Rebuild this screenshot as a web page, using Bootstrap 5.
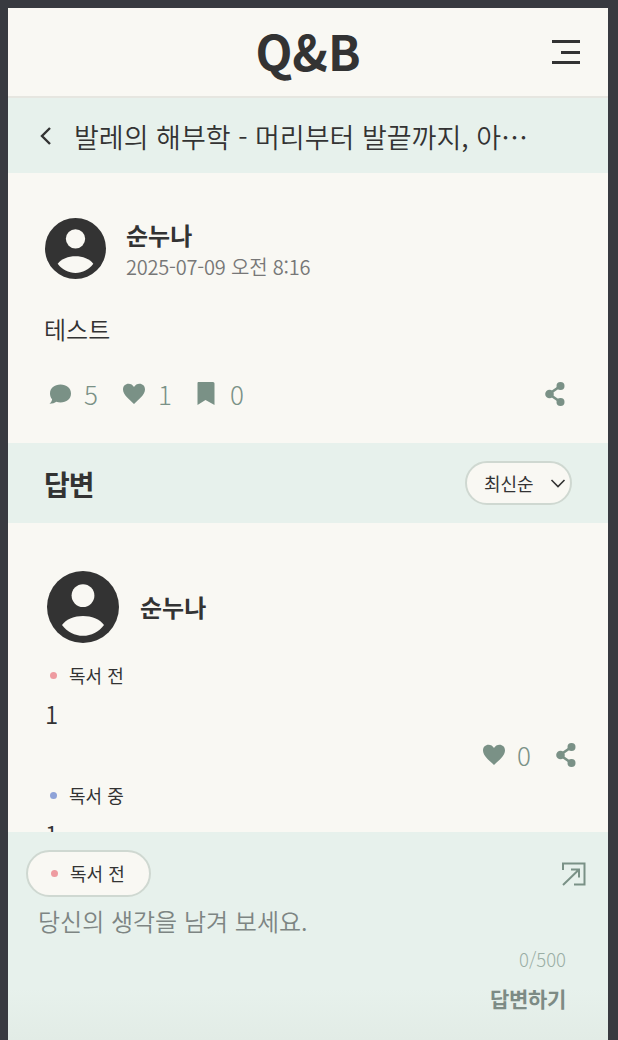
<!DOCTYPE html>
<html lang="ko">
<head>
  <meta charset="UTF-8">
  <meta name="viewport" content="width=device-width, initial-scale=1.0">
  <title>Q&amp;B</title>
  <link href="https://cdn.jsdelivr.net/npm/bootstrap@5.3.3/dist/css/bootstrap.min.css" rel="stylesheet" />
  <style>
    html, body { height: 100%; }
    body { background-color: #383a40; font-family: "Noto Sans CJK KR", "Noto Sans", sans-serif; color: #333; overflow: hidden; }
    .app-frame { margin: 8px 10px 0 8px; height: 1032px; background-color: #f9f8f3; }
    .app-header { height: 90px; border-bottom: 2px solid #e6e6e0; }
    .app-title { font-size: 48px; font-weight: 700; line-height: 1; color: #333; margin-top: -4px; }
    .menu-btn { right: 28px; top: 32px; width: 28px; height: 24px; }
    .book-bar { height: 75px; background-color: #e7f1ec; padding: 0 80px 0 32px; }
    .book-back { margin-right: 22px; }
    .book-title { font-size: 27px; font-weight: 350; color: #333; margin-top: 4px; }
    .post-box { padding: 45px 37px 0; height: 270px; }
    .post-meta { padding-top: 3px; margin-left: 20px; }
    .post-name { font-size: 24px; font-weight: 700; line-height: 28px; }
    .post-date { font-size: 20px; line-height: 24px; margin-top: 6px; color: #777; font-weight: 350; letter-spacing: -0.2px; }
    .post-text { font-size: 24px; line-height: 34px; margin: 33px 0 0 -1px; font-weight: 350; }
    .stat-row { margin-top: 31px; padding-left: 3px; padding-right: 6px; height: 34px; }
    .stat-item { font-size: 26px; font-weight: 300; color: #7a9186; line-height: 34px; width: 74px; gap: 12px; }
    .stat-item-last { width: auto; gap: 14px; }
    .stat-icon { fill: #7a9186; }
    .answers-bar { height: 80px; background-color: #e7f1ec; padding: 0 36px; }
    .answers-title { font-size: 28px; font-weight: 700; letter-spacing: -1px; margin-top: 4px; }
    .sort-pill { width: 107px; height: 44px; border: 2px solid #cfd8d1; border-radius: 22px; background-color: #f9f8f3; font-size: 18px; padding: 0 4px 0 17px; }
    .answer-box { padding: 48px 31px 0 39px; }
    .answer-name { font-size: 24px; font-weight: 700; margin-left: 21px; }
    .stage-label { font-size: 18px; line-height: 24px; font-weight: 400; margin-top: 20px; }
    .stage-label-next { margin-top: 11px; }
    .stage-dot { width: 7px; height: 7px; border-radius: 50%; margin: 0 12px 0 3px; flex: none; }
    .dot-before { background-color: #ee9ba0; }
    .dot-during { background-color: #8fa3d8; }
    .answer-text { font-size: 24px; line-height: 34px; font-weight: 350; margin: 10px 0 0 -2px; }
    .answer-actions { margin-top: 7px; justify-content: flex-end; width: auto; gap: 0; }
    .answer-count { margin-left: 11px; }
    .composer { height: 208px; background: linear-gradient(#e7f1ec 75%, #e2ece6); padding: 18px 22px 0 18px; }
    .stage-pill { width: 125px; height: 47px; border: 2px solid #cfd8d1; border-radius: 24px; background-color: #f9f8f3; font-size: 18px; padding-left: 20px; }
    .composer-hint { font-size: 24px; font-weight: 350; color: #7d8583; line-height: 34px; margin: 7px 0 0 12px; }
    .composer-count { font-size: 18.500px; font-weight: 300; color: #9aaea5; line-height: 24px; margin: 9px 20px 0 0; }
    .composer-submit { font-size: 21px; font-weight: 700; color: #7d8b85; line-height: 30px; margin: 12px 20px 0 0; letter-spacing: -0.3px; }
  </style>
</head>
<body>

<div class="app-frame d-flex flex-column">
  <!-- Header -->
  <header class="app-header position-relative d-flex align-items-center justify-content-center flex-shrink-0">
    <h1 class="app-title mb-0">Q&amp;B</h1>
    <svg class="menu-btn position-absolute" viewBox="0 0 28 24" aria-label="메뉴">
      <path d="M0 1.500h28M9 12.500h19M0 22.500h28" stroke="#333" stroke-width="3" fill="none"/>
    </svg>
  </header>

  <!-- Book title -->
  <div class="book-bar d-flex align-items-center flex-shrink-0">
    <svg width="12" height="20" viewBox="0 0 12 20" class="book-back flex-shrink-0">
      <path d="M10 2 2 10l8 8" stroke="#333" stroke-width="2.400" fill="none"/>
    </svg>
    <span class="book-title text-truncate">발레의 해부학 - 머리부터 발끝까지, 아름다운 움직임</span>
  </div>

  <div class="flex-grow-1 overflow-hidden">
    <!-- Question -->
    <section class="post-box">
      <div class="d-flex align-items-start">
        <svg width="61" height="61" viewBox="0 0 60 60" class="flex-shrink-0">
          <circle cx="30" cy="30" r="30" fill="#333"/>
          <circle cx="30" cy="20.500" r="9.500" fill="#f9f8f3"/>
          <path d="M12.500 45C16 40 23 37.500 30 37.500S44 40 47.500 45C43 51 37 54 30 54S17 51 12.500 45z" fill="#f9f8f3"/>
        </svg>
        <div class="post-meta">
          <div class="post-name">순누나</div>
          <div class="post-date">2025-07-09 오전 8:16</div>
        </div>
      </div>
      <p class="post-text mb-0">테스트</p>
      <div class="stat-row d-flex align-items-center">
        <span class="stat-item d-flex align-items-center">
          <svg class="stat-icon" width="24" height="24" viewBox="0 0 24 24"><path d="M12.500 2.500c6 0 10.500 3.500 10.500 9s-4.500 9-10.500 9c-1.500 0-3-.2-4.200-.7-1.500 1.200-3.800 1.900-6.800 1.900 1.500-1.200 2.400-2.800 2.600-4.500C2.600 15.500 2 13.600 2 11.500c0-5.500 4.500-9 10.500-9z"/></svg>5
        </span>
        <span class="stat-item d-flex align-items-center">
          <svg class="stat-icon" width="24" height="24" viewBox="0 0 24 24"><path d="M12 22C8 18 1 13 1 7.500 1 4 3.500 1.800 6.500 1.800c2.300 0 4.300 1.200 5.500 3.300 1.200-2.100 3.200-3.300 5.500-3.300C20.500 1.800 23 4 23 7.500 23 13 16 18 12 22z"/></svg>1
        </span>
        <span class="stat-item stat-item-last d-flex align-items-center">
          <svg class="stat-icon" width="20" height="24" viewBox="0 0 20 24"><path d="M2 0h15a1.500 1.500 0 0 1 1.500 1.500V23l-9-5-8 5V1.500A1.500 1.500 0 0 1 2 0z"/></svg>0
        </span>
        <svg class="stat-icon ms-auto" width="20" height="24" viewBox="0 0 20 24">
          <path d="M15.500 4 4 12l11.500 8" stroke="#7a9186" stroke-width="2.600" fill="none"/>
          <circle cx="15.500" cy="4" r="4"/><circle cx="4.500" cy="12" r="4.300"/><circle cx="15.500" cy="20" r="4"/>
        </svg>
      </div>
    </section>

    <!-- Answers header -->
    <div class="answers-bar d-flex align-items-center justify-content-between">
      <h2 class="answers-title mb-0">답변</h2>
      <div class="sort-pill d-flex align-items-center justify-content-between">
        <span>최신순</span>
        <svg width="16" height="9" viewBox="0 0 16 9"><path d="M1.500 1 8 7.500 14.500 1" stroke="#333" stroke-width="1.600" fill="none"/></svg>
      </div>
    </div>

    <!-- Answer -->
    <section class="answer-box">
      <div class="d-flex align-items-center">
        <svg width="72" height="72" viewBox="0 0 60 60" class="flex-shrink-0">
          <circle cx="30" cy="30" r="30" fill="#333"/>
          <circle cx="30" cy="20.500" r="9.500" fill="#f9f8f3"/>
          <path d="M12.500 45C16 40 23 37.500 30 37.500S44 40 47.500 45C43 51 37 54 30 54S17 51 12.500 45z" fill="#f9f8f3"/>
        </svg>
        <div class="answer-name">순누나</div>
      </div>
      <div class="stage-label d-flex align-items-center">
        <span class="stage-dot dot-before"></span>독서 전
      </div>
      <div class="answer-text">1</div>
      <div class="stat-item answer-actions d-flex align-items-center">
        <svg class="stat-icon" width="24" height="24" viewBox="0 0 24 24"><path d="M12 22C8 18 1 13 1 7.500 1 4 3.500 1.800 6.500 1.800c2.300 0 4.300 1.200 5.500 3.300 1.200-2.100 3.200-3.300 5.500-3.300C20.500 1.800 23 4 23 7.500 23 13 16 18 12 22z"/></svg>
        <span class="answer-count">0</span>
        <svg class="stat-icon ms-4" width="22" height="24" viewBox="0 0 20 24">
          <path d="M15.500 4 4 12l11.500 8" stroke="#7a9186" stroke-width="2.600" fill="none"/>
          <circle cx="15.500" cy="4" r="4"/><circle cx="4.500" cy="12" r="4.300"/><circle cx="15.500" cy="20" r="4"/>
        </svg>
      </div>
      <div class="stage-label stage-label-next d-flex align-items-center">
        <span class="stage-dot dot-during"></span>독서 중
      </div>
      <div class="answer-text">1</div>
    </section>
  </div>

  <!-- Composer -->
  <div class="composer flex-shrink-0">
    <div class="d-flex align-items-center justify-content-between">
      <div class="stage-pill d-flex align-items-center">
        <span class="stage-dot dot-before"></span>독서 전
      </div>
      <svg width="24" height="24" viewBox="0 0 24 24">
        <path d="M1 8V1.500h21.500v21H12M1 23 17 7.500M9 7.500h8v8" stroke="#7a9186" stroke-width="2" fill="none"/>
      </svg>
    </div>
    <div class="composer-hint">당신의 생각을 남겨 보세요.</div>
    <div class="composer-count text-end">0/500</div>
    <div class="composer-submit text-end">답변하기</div>
  </div>
</div>

<script src="https://cdn.jsdelivr.net/npm/bootstrap@5.3.3/dist/js/bootstrap.bundle.min.js"></script>
</body>
</html>
